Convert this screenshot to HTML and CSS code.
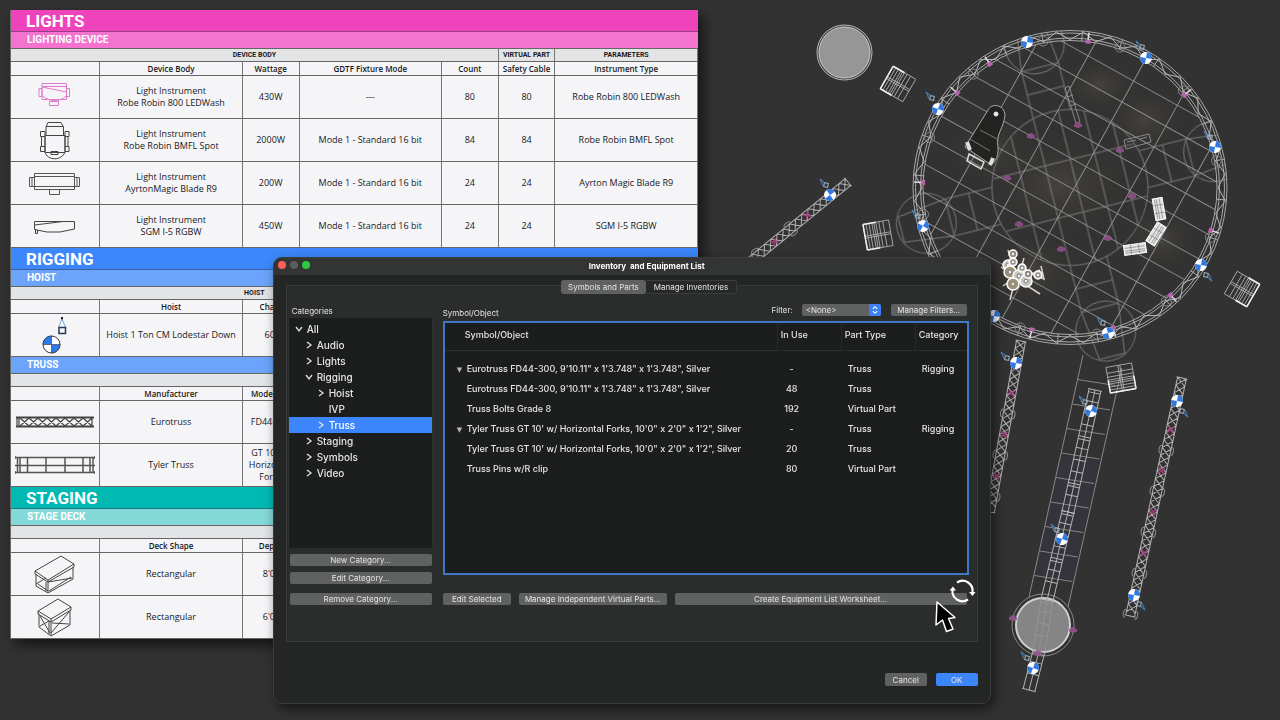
FILE: index.html
```html
<!DOCTYPE html>
<html lang="en">
<head>
<meta charset="utf-8">
<title>Inventory and Equipment List</title>
<link rel="stylesheet" href="styles.css">
</head>
<body>
<main class="desktop">
  <svg class="plan" id="plan" viewBox="0 0 1280 720" preserveAspectRatio="xMaxYMin meet" role="img" aria-label="Stage plan">
    <defs>
      <radialGradient id="glow"><stop offset="0" stop-color="#4e4a42" stop-opacity=".7"/><stop offset="1" stop-color="#2e2d2b" stop-opacity="0"/></radialGradient>
      <clipPath id="ring-clip"><circle r="157"/></clipPath>
      <g id="hoist"><circle r="6" fill="#fff"/><path d="M0 0V-6A6 6 0 0 1 6 0ZM0 0V6A6 6 0 0 1 -6 0Z" fill="#3278e0"/></g>
      <g id="chain" fill="none" stroke="#4d7fb8"><rect x="-2" y="-2" width="4" height="4" stroke="#a5b4c4"/><path d="M-2 -2L-7 -5L-3 1"/></g>
      <g id="cart" fill="none" stroke="#b4b4b4" stroke-width=".8"><rect x="-13" y="-13" width="26" height="26"/><path d="M-13 -13V13M-10 -13V13M-7 -13V13M-4 -13V13M-2 -13V13M0 -13V13M3 -13V13M7 -13V13M-13 -1H13M-13 1H13"/><path d="M-13 -13H0M-13 13H0M-13 -13V13" stroke="#f0f0f0" stroke-width="1.500"/></g>
      <g id="sofa"><rect x="-11" y="-5" width="22" height="10" fill="#e4e4e4" stroke="#fff"/><path d="M-10 -2H10M-10 1H10M-10 3H10M-4 -5V5M4 -5V5" stroke="#777" stroke-width=".6"/></g>
    </defs>
  </svg>

  <article class="sheet">
    <section>
      <h2 class="band lights">LIGHTS</h2>
      <h3 class="subband lights-sub">LIGHTING DEVICE</h3>
      <table class="grid">
        <colgroup><col class="c-pic"><col class="c-wide"><col class="c-slim"><col class="c-wide"><col class="c-slim"><col class="c-slim"><col class="c-wide"></colgroup>
        <tr class="group"><th colspan="5">DEVICE BODY</th><th>VIRTUAL PART</th><th>PARAMETERS</th></tr>
        <tr class="heads"><th></th><th>Device Body</th><th>Wattage</th><th>GDTF Fixture Mode</th><th>Count</th><th>Safety Cable</th><th>Instrument Type</th></tr>
        <tr><td><svg class="pic" viewBox="0 0 80 40" fill="none" stroke="#e07acb"><path d="M27 6.500H51.500V22.500H27ZM27 9.500H51.500M24 11.500H27V19.500H24ZM51.500 11.500H54.500V19.500H51.500ZM27 10L51.500 15M28 19C33 25 46 25 51 19M34.500 24.500H43.500V28.500H34.500Z"/></svg></td><td>Light Instrument<br>Robe Robin 800 LEDWash</td><td>430W</td><td>---</td><td>80</td><td>80</td><td>Robe Robin 800 LEDWash</td></tr>
        <tr><td><svg class="pic" viewBox="0 0 80 40" fill="none" stroke="#444"><path d="M33 2.500H46L48.500 7V15.500H50V32.500H30V15.500H31V7ZM31 6.500H48M30 15.500H50M30 32C32 41 47 41 50 32M36 31.500H43V34.500H36ZM25.500 11.500H30V16.500H25.500ZM50 11.500H54V16.500H50ZM26.500 16.500H30V26.500H26.500ZM50 16.500H53V26.500H50ZM25.500 26.500H30V31.500H25.500ZM50 26.500H54V31.500H50Z"/></svg></td><td>Light Instrument<br>Robe Robin BMFL Spot</td><td>2000W</td><td>Mode 1 - Standard 16 bit</td><td>84</td><td>84</td><td>Robe Robin BMFL Spot</td></tr>
        <tr><td><svg class="pic" viewBox="0 0 80 40" fill="none" stroke="#555"><path d="M19.500 10.500H59.500V26.500H19.500ZM19.500 13.500H59.500M19.500 23.500H59.500M14.500 14.500H19.500V23.500H14.500ZM59.500 14.500H64.500V23.500H59.500ZM17 14V23M62 14V23M34.500 26.500H44.500V31.500H34.500Z"/></svg></td><td>Light Instrument<br>AyrtonMagic Blade R9</td><td>200W</td><td>Mode 1 - Standard 16 bit</td><td>24</td><td>24</td><td>Ayrton Magic Blade R9</td></tr>
        <tr><td><svg class="pic" viewBox="0 0 80 40" fill="none" stroke="#444"><path d="M19.500 15.500H59.500V23L45 26H32L19.500 23.500ZM19.500 19L48 15.500M20.500 23V27.500H22.500V24"/></svg></td><td>Light Instrument<br>SGM I-5 RGBW</td><td>450W</td><td>Mode 1 - Standard 16 bit</td><td>24</td><td>24</td><td>SGM I-5 RGBW</td></tr>
      </table>
    </section>
    <section>
      <h2 class="band rigging">RIGGING</h2>
      <h3 class="subband rigging-sub">HOIST</h3>
      <table class="grid">
        <colgroup><col class="c-pic"><col class="c-wide"><col class="c-slim"><col class="c-wide"><col class="c-slim"><col class="c-slim"><col class="c-wide"></colgroup>
        <tr class="group"><th colspan="5">HOIST</th><th></th><th></th></tr>
        <tr class="heads"><th></th><th>Hoist</th><th>Chain</th><th></th><th></th><th></th><th></th></tr>
        <tr><td><svg class="pic" viewBox="0 0 80 40" fill="none"><path d="M47 2V5" stroke="#222" stroke-width="2"/><path d="M47 4L43.500 12M47 4L50.500 12" stroke="#77a9dd"/><path d="M44 12.500H50.500V18.500H44Z" stroke="#24394f" stroke-width="1.500"/><circle cx="36.500" cy="29.500" r="8.500" fill="#fff" stroke="#333"/><path d="M36.500 29.500V21A8.500 8.500 0 0 0 28 29.500ZM36.500 29.500V38A8.500 8.500 0 0 0 45 29.500Z" fill="#2f78e8" stroke="#333" stroke-width=".6"/></svg></td><td>Hoist 1 Ton CM Lodestar Down</td><td>60'</td><td></td><td></td><td></td><td></td></tr>
      </table>
      <h3 class="subband rigging-sub">TRUSS</h3>
      <table class="grid">
        <colgroup><col class="c-pic"><col class="c-wide"><col class="c-slim"><col class="c-wide"><col class="c-slim"><col class="c-slim"><col class="c-wide"></colgroup>
        <tr class="group"><th colspan="7"></th></tr>
        <tr class="heads"><th></th><th>Manufacturer</th><th>Model No.</th><th></th><th></th><th></th><th></th></tr>
        <tr><td><svg class="pic" viewBox="0 0 80 40" fill="none" stroke="#444"><path d="M1 15.500H79M1 24.500H79" stroke-width="2"/><path d="M2 15V25M4 15V25M77 15V25M5 16L14 24M14 16L5 24M14 16L23 24M23 16L14 24M23 16L32 24M32 16L23 24M32 16L41 24M41 16L32 24M41 16L50 24M50 16L41 24M50 16L59 24M59 16L50 24M59 16L68 24M68 16L59 24M68 16L77 24M77 16L68 24" stroke-width="1.200"/></svg></td><td>Eurotruss</td><td>FD44-300</td><td></td><td></td><td></td><td></td></tr>
        <tr><td><svg class="pic" viewBox="0 0 80 40" fill="none" stroke="#555"><path d="M0 12.500H80M0 20.500H80M0 27.500H80" stroke-width="1.500"/><path d="M2.500 12V28M5 12V28M12.500 12V28M31 12V28M50 12V28M68 12V28M75 12V28M78 12V28M0 11V14M0 26V29M80 11V14M80 26V29" stroke-width="1.500"/></svg></td><td>Tyler Truss</td><td>GT 10' w/<br>Horizontal<br>Forks</td><td></td><td></td><td></td><td></td></tr>
      </table>
    </section>
    <section>
      <h2 class="band staging">STAGING</h2>
      <h3 class="subband staging-sub">STAGE DECK</h3>
      <table class="grid">
        <colgroup><col class="c-pic"><col class="c-wide"><col class="c-slim"><col class="c-wide"><col class="c-slim"><col class="c-slim"><col class="c-wide"></colgroup>
        <tr class="group"><th colspan="7"></th></tr>
        <tr class="heads"><th></th><th>Deck Shape</th><th>Depth</th><th></th><th></th><th></th><th></th></tr>
        <tr><td><svg class="pic" viewBox="0 0 80 40" fill="none" stroke="#444"><path d="M20 17L46 2L59 10L33 26ZM20 17V20L33 28L59 13V10M33 26V38M21 20V32L33 39L58 25V13M31 28V37M21 30L31 24M33 28L57 24M34 37L56 23M23 30L33 37"/></svg></td><td>Rectangular</td><td>8'0"</td><td></td><td></td><td></td><td></td></tr>
        <tr><td><svg class="pic" viewBox="0 0 80 40" fill="none" stroke="#444"><path d="M23 14L43 2L56 10L36 22ZM23 14V17L36 25L56 13V10M36 22V38M34 24V37M24 17V30L36 39L55 28V13M36 36L54 15M37 26L54 27M25 29L34 24M25 19L35 36"/></svg></td><td>Rectangular</td><td>6'0"</td><td></td><td></td><td></td><td></td></tr>
      </table>
    </section>
  </article>

  <section class="dialog" role="dialog" aria-labelledby="dlg-title">
    <header class="titlebar">
      <div class="lamps"><button class="lamp red" aria-label="Close"></button><button class="lamp gray" aria-label="Minimize"></button><button class="lamp green" aria-label="Zoom"></button></div>
      <h1 id="dlg-title" class="title">Inventory &nbsp;and Equipment List</h1>
    </header>
    <div class="body">
      <div class="panel">
        <div class="tabs" role="tablist"><button class="tab active" role="tab" aria-selected="true">Symbols and Parts</button><button class="tab" role="tab" aria-selected="false">Manage Inventories</button></div>
        <div class="columns">
          <div class="side">
            <h2 class="label" id="cat-label">Categories</h2>
            <ul class="tree" role="tree" aria-labelledby="cat-label">
              <li role="treeitem" class="l0 open"><svg class="chev" viewBox="0 0 8 8"><path d="M2 1L6 4L2 7"/></svg>All</li>
              <li role="treeitem" class="l1"><svg class="chev" viewBox="0 0 8 8"><path d="M2 1L6 4L2 7"/></svg>Audio</li>
              <li role="treeitem" class="l1"><svg class="chev" viewBox="0 0 8 8"><path d="M2 1L6 4L2 7"/></svg>Lights</li>
              <li role="treeitem" class="l1 open"><svg class="chev" viewBox="0 0 8 8"><path d="M2 1L6 4L2 7"/></svg>Rigging</li>
              <li role="treeitem" class="l2"><svg class="chev" viewBox="0 0 8 8"><path d="M2 1L6 4L2 7"/></svg>Hoist</li>
              <li role="treeitem" class="l2"><svg class="chev" viewBox="0 0 8 8"></svg>IVP</li>
              <li role="treeitem" class="l2 selected" aria-selected="true"><svg class="chev" viewBox="0 0 8 8"><path d="M2 1L6 4L2 7"/></svg>Truss</li>
              <li role="treeitem" class="l1"><svg class="chev" viewBox="0 0 8 8"><path d="M2 1L6 4L2 7"/></svg>Staging</li>
              <li role="treeitem" class="l1"><svg class="chev" viewBox="0 0 8 8"><path d="M2 1L6 4L2 7"/></svg>Symbols</li>
              <li role="treeitem" class="l1"><svg class="chev" viewBox="0 0 8 8"><path d="M2 1L6 4L2 7"/></svg>Video</li>
            </ul>
            <div class="stack"><button class="btn">New Category...</button><button class="btn">Edit Category...</button><button class="btn last">Remove Category...</button></div>
          </div>
          <div class="content">
            <div class="toolbar">
              <h2 class="label low">Symbol/Object</h2>
              <label class="label" for="filter">Filter:</label>
              <span class="picker"><select id="filter"><option>&lt;None&gt;</option></select><svg class="stepper" viewBox="0 0 11 11"><rect width="11" height="11" rx="2" fill="#3c82f6"/><path d="M3.500 4.500L5.500 2.500L7.500 4.500M3.500 6.500L5.500 8.500L7.500 6.500" fill="none" stroke="#fff"/></svg></span>
              <button class="btn filters">Manage Filters...</button>
            </div>
            <div class="list">
              <table class="items">
                <colgroup><col><col class="k-use"><col class="k-type"><col class="k-cat"></colgroup>
                <thead><tr><th>Symbol/Object</th><th>In Use</th><th>Part Type</th><th>Category</th></tr></thead>
                <tbody>
                  <tr><td><span class="tri">▼</span>Eurotruss FD44-300, 9'10.11" x 1'3.748" x 1'3.748", Silver</td><td>-</td><td>Truss</td><td>Rigging</td></tr>
                  <tr><td>Eurotruss FD44-300, 9'10.11" x 1'3.748" x 1'3.748", Silver</td><td>48</td><td>Truss</td><td></td></tr>
                  <tr><td>Truss Bolts Grade 8</td><td>192</td><td>Virtual Part</td><td></td></tr>
                  <tr><td><span class="tri">▼</span>Tyler Truss GT 10' w/ Horizontal Forks, 10'0" x 2'0" x 1'2", Silver</td><td>-</td><td>Truss</td><td>Rigging</td></tr>
                  <tr><td>Tyler Truss GT 10' w/ Horizontal Forks, 10'0" x 2'0" x 1'2", Silver</td><td>20</td><td>Truss</td><td></td></tr>
                  <tr><td>Truss Pins w/R clip</td><td>80</td><td>Virtual Part</td><td></td></tr>
                </tbody>
              </table>
            </div>
            <div class="actions"><button class="btn edit">Edit Selected</button><button class="btn manage">Manage Independent Virtual Parts...</button><button class="btn create">Create Equipment List Worksheet...</button></div>
          </div>
        </div>
      </div>
      <footer class="foot"><button class="btn">Cancel</button><button class="btn primary">OK</button></footer>
    </div>
    <svg class="pointer" viewBox="0 0 50 60" aria-hidden="true">
      <g fill="none" stroke="#fff" stroke-width="2.200"><path d="M24 7.500A10 10 0 0 1 39.500 17M35 24.500A10 10 0 0 1 19.500 15"/></g>
      <path d="M16.500 15.500L20 11.500L23 15.500ZM36 17H42.500L39.500 21Z" fill="#fff"/>
      <path d="M4 27L3 50L9.500 45L13.500 56.500L20 54L15.500 43.500L22 42.500Z" fill="#000" stroke="#fff" stroke-width="1.500" stroke-linejoin="round"/>
    </svg>
  </section>
</main>
<script src="plan.js"></script>
</body>
</html>
```

FILE: styles.css
```css
* { box-sizing: border-box; }
body { margin: 0; background: #323232; font-family: Inter, "Liberation Sans", sans-serif; }
h1, h2, h3, ul { margin: 0; padding: 0; font-weight: 400; }
button, select { font: inherit; color: inherit; border: 0; padding: 0; }

.desktop { position: relative; min-height: 100vh; padding: 10px; overflow: hidden; }
.plan { position: absolute; inset: 0; width: 100%; height: 100%; }

/* Worksheet */
.sheet { position: relative; width: 54.6%; border-left: 1px solid #6a6a6a; background: #f5f5f8; color: #18181c; font-family: "Open Sans", "Liberation Sans", sans-serif; box-shadow: 5px 6px 12px rgba(0, 0, 0, .6); }
.band { height: 22px; padding-left: 15px; color: #fff; font-family: Roboto, sans-serif; font-size: 17px; line-height: 22px; font-weight: 700; border-bottom: 1px solid rgba(60, 60, 80, .5); }
.subband { height: 17px; padding-left: 16px; color: #fff; font-family: Roboto, sans-serif; font-size: 10px; line-height: 16px; font-weight: 700; border-bottom: 1px solid #666; }
.lights { background: #ee43bb; }
.lights-sub { background: #f373ce; }
.rigging { background: #3c87fb; }
.rigging-sub { background: #6ca4fb; }
.staging { background: #00b9b3; }
.staging-sub { background: #82d9d7; }
.grid { width: 100%; table-layout: fixed; border-spacing: 0; font-size: 9px; line-height: 12px; }
.c-pic { width: 13%; }
.c-wide { width: 20.75%; }
.c-slim { width: 8.25%; }
.grid th, .grid td { padding: 0; text-align: center; vertical-align: middle; border-right: 1px solid #777; border-bottom: 1px solid #666; }
.grid tr { height: 43px; }
.grid .group { height: 13px; background: #e3e4e6; font-family: Roboto, sans-serif; font-size: 7px; }
.grid .heads { height: 14px; font-size: 8px; }
.grid .heads th { font-weight: 600; }
.pic { display: block; width: 80px; height: 40px; margin: 0 auto; }

/* Dialog window */
.dialog { position: absolute; left: 21.3%; top: 257px; width: 56.1%; border: 1px solid #3b3d3c; border-radius: 9px; background: #242625; color: #e4e4e4; font-size: 8px; line-height: 12px; box-shadow: 3px 5px 12px rgba(0, 0, 0, .55); overflow: hidden; }
.titlebar { display: grid; grid-template-columns: 1fr auto 1fr; align-items: start; height: 17px; padding-top: 2px; background: #333534; }
.lamps { display: flex; gap: 4px; padding: 1px 0 0 4px; }
.lamp { width: 8px; height: 8px; border-radius: 50%; }
.red { background: #fe5f57; }
.gray { background: #5b5c5e; }
.green { background: #2bc840; }
.title { font-size: 8px; font-weight: 700; color: #fff; padding-left: 30px; }
.body { padding: 10px 12px 17px; }
.panel { border: 1px solid #393b3a; background: #2b2d2c; padding: 0 8px 36px 1px; }
.tabs { display: flex; justify-content: center; margin-top: -6px; padding-left: 42px; }
.tab { height: 14px; padding: 0 8px; border: 1px solid #3b3d3c; border-left: 0; border-radius: 0 3px 3px 0; background: #272928; }
.tab.active { padding: 0 7px; border: 0; border-radius: 3px; background: #606261; }
.columns { display: grid; grid-template-columns: 145fr 526fr; column-gap: 10px; padding-top: 9px; }
.side, .content { display: flex; flex-direction: column; min-width: 0; }
.label { font-size: 8px; line-height: 12px; }
.side > .label { padding: 2px 0 1px 4px; }
.tree { list-style: none; height: 230px; padding-top: 3px; background: #1c1e1d; border: 1px solid #2f3130; border-width: 0 1px; font-size: 10px; font-weight: 500; line-height: 16px; }
.tree li { display: flex; align-items: center; gap: 4px; height: 16px; }
.l0 { padding-left: 6px; }
.l1 { padding-left: 16px; }
.l2 { padding-left: 28px; }
.selected { background: #3c85fb; color: #fff; }
.chev { width: 8px; height: 8px; fill: none; stroke: #ddd; stroke-width: 1.3; }
.open .chev { transform: rotate(90deg); }
.stack { display: flex; flex-direction: column; gap: 6px; padding: 6px 1px 0 2px; }
.stack .last { margin-top: 3px; }
.btn { height: 12px; line-height: 12px; border-radius: 2px; background: #606261; text-align: center; white-space: nowrap; }
.toolbar { display: flex; align-items: flex-start; gap: 9px; padding: 1px 2px 2px 0; }
.low { flex: 1; padding-top: 3px; }
.picker { position: relative; flex: 0 0 79px; display: flex; }
.picker select { width: 100%; height: 12px; appearance: none; border-radius: 2px; background: #606261; padding-left: 4px; }
.stepper { position: absolute; right: 0; top: 0; width: 12px; height: 12px; }
.filters { flex: 0 0 76px; margin-left: 1px; }
.list { height: 254px; border: 2px solid #4077c6; background: #1c1e1d; }
.items { width: 100%; table-layout: fixed; border-spacing: 0; font-size: 9px; font-weight: 500; line-height: 14px; text-align: left; white-space: nowrap; }
.k-use { width: 64px; }
.k-type { width: 74px; }
.k-cat { width: 52px; }
.items th { height: 28px; padding: 0 0 3px 3px; font-weight: 500; border-bottom: 1px solid #2d2f2e; border-left: 1px solid #292b2a; }
.items th:first-child { padding-left: 20px; border-left: 0; }
.items td { height: 20px; padding: 0 0 0 7px; }
.items td:first-child { padding-left: 22px; }
.items td:nth-child(2) { padding: 0 34px 0 0; text-align: center; }
.items tbody::before { content: ""; display: block; height: 8px; }
.tri { display: inline-block; width: 10px; margin-left: -10px; font-size: 7px; line-height: 8px; color: #b5b5b5; font-family: "DejaVu Sans", sans-serif; }
.actions { display: flex; gap: 8px; padding: 18px 2px 0 0; }
.edit { flex: 68 1 0; }
.manage { flex: 147 1 0; }
.create { flex: 291 1 0; }
.foot { display: flex; justify-content: flex-end; gap: 9px; padding-top: 31px; }
.foot .btn { width: 42px; height: 13px; }
.foot .primary { background: #3c85fb; }
.pointer { position: absolute; right: 7px; top: 317px; width: 50px; height: 60px; }
```

FILE: plan.js
```js
const plan = document.getElementById('plan');
const out = [];
const f = n => n.toFixed(1);
const path = (d, color = '#a4a4a4', extra = '') => out.push(`<path d="${d}" fill="none" stroke="${color}" ${extra}/>`);
const circle = (x, y, r, color = '#a4a4a4', fill = 'none', w = 1) => out.push(`<circle cx="${x}" cy="${y}" r="${r}" fill="${fill}" stroke="${color}" stroke-width="${w}"/>`);
const use = (id, x, y, a = 0) => out.push(`<use href="#${id}" transform="translate(${x} ${y}) rotate(${a})"/>`);

// Warm pools of light on the floor
[[990, 150, 50, 40], [1100, 85, 45, 32], [1145, 120, 50, 40], [1060, 185, 90, 60], [1160, 240, 45, 40], [1030, 270, 60, 40]]
  .forEach(([x, y, rx, ry]) => out.push(`<ellipse cx="${x}" cy="${y}" rx="${rx}" ry="${ry}" fill="url(#glow)"/>`));

// Floor grid clipped to the ring
const CX = 1070, CY = 187.5, R = 147;
out.push(`<g transform="translate(${CX} ${CY}) rotate(29)" stroke-width=".9">`);
[-99, -48, 4, 54, 104].forEach(o => { const h = Math.sqrt(R * R - o * o); path(`M${o} ${f(-h)}V${f(h)}`, '#949494'); });
[-124, -100, -76, -51, -26, 0, 25, 50, 75, 100, 124].forEach(o => { const h = Math.sqrt(R * R - o * o); path(`M${f(-h)} ${o}H${f(h)}`, '#8c8c8c'); });
out.push('</g>');

// Centre platform and its four arms; two arms reach past the ring
out.push(`<g transform="translate(${CX} ${CY}) rotate(-14)" opacity=".6">`);
circle(0, 0, 78);
[-45, -19, 7, 32, 57].forEach(o => { const h = Math.sqrt(78 * 78 - o * o); path(`M${o} ${f(-h)}V${f(h)}`); });
[-27, 27].forEach(o => path(`M-72 ${o}H72`));
[0, 90, 180, 270].forEach(a => {
  const inside = a < 180;
  out.push(`<g ${inside ? 'clip-path="url(#ring-clip)"' : ''}><g transform="rotate(${a})">`);
  path('M-19 -76V-124H19V-76M-19 -100H19');
  path('M-19 -124L-13 -174H13L19 -124');
  circle(0, -148, 30);
  out.push('</g></g>');
});
out.push('</g>');

// Ring truss
[157, 154.5, 149.5, 147].forEach(r => circle(CX, CY, r, '#a8a8a8'));
let ring = '';
for (let i = 0; i <= 72; i++) {
  const a = i * Math.PI / 36, r = i % 2 ? 156 : 148;
  ring += `${i ? 'L' : 'M'}${f(CX + r * Math.cos(a))} ${f(CY + r * Math.sin(a))}`;
}
path(ring, '#b8b8b8');
for (let i = 0; i < 24; i++) {
  const a = i * Math.PI / 12 + .08, c = Math.cos(a), s = Math.sin(a);
  path(`M${f(CX + 147 * c)} ${f(CY + 147 * s)}L${f(CX + 157 * c)} ${f(CY + 157 * s)}`, '#aaa');
  if (i % 2) circle(f(CX + 149 * c), f(CY + 149 * s), 5, '#858585');
}
[17, 47, 73, 105, 138, 182, 220, 237, 277, 321].forEach(d => {
  const a = d * Math.PI / 180, c = Math.cos(a), s = Math.sin(a);
  path(`M${f(CX + 147 * c)} ${f(CY + 147 * s)}L${f(CX + 156 * c)} ${f(CY + 156 * s)}`, '#e4dce4', 'stroke-width="1.500"');
  path(`M${f(CX + 145 * c)} ${f(CY + 145 * s)}L${f(CX + 149 * c)} ${f(CY + 149 * s)}`, '#b763ad', 'stroke-width="5"');
});

// Straight trusses: two rails with crossed bracing
function truss(x1, y1, x2, y2, w, step, ladder) {
  const L = Math.hypot(x2 - x1, y2 - y1), a = Math.atan2(y2 - y1, x2 - x1) * 180 / Math.PI;
  out.push(`<g transform="translate(${x1} ${y1}) rotate(${f(a)})">`);
  let d = `M0 ${-w}H${f(L)}M0 ${w}H${f(L)}M0 ${-w - 1}V${w + 1}M${f(L)} ${-w - 1}V${w + 1}`;
  if (ladder) d += `M0 0H${f(L)}`;
  for (let x = 0; x + step <= L; x += step)
    d += ladder ? `M${x} ${-w}V${w}${x % 48 < step ? `M${x + 3} ${-w}V${w}` : ''}`
                : `M${x} ${-w}L${x + step} ${w}M${x} ${w}L${x + step} ${-w}`;
  path(d, '#b2b2b2');
  if (!ladder) for (let x = 53; x < L - 10; x += 42) {
    path(`M${x - 3} -3L${x + 3} 3M${x - 3} 3L${x + 3} -3`, '#a43c7d', 'stroke-width="1.500"');
    path(`M${x + 17} -5C${x + 17} -8 ${x + 25} -8 ${x + 25} -5M${x + 17} 5C${x + 17} 8 ${x + 25} 8 ${x + 25} 5`, '#8c8c8c');
  }
  out.push('</g>');
}
out.push('<path d="M1061 455L1035 574L1073 580L1098 462Z" fill="#363643" opacity=".65"/>');
path('M1083 355L1029 597M1122 368L1068 607', '#8a8a8a');
for (let i = 1; i < 10; i++) path(`M${f(1083 - i * 5.4)} ${f(355 + i * 24.5)}l38 6`, '#858585');
truss(848, 182, 740, 270, 4.5, 8);
truss(1021, 341, 990, 512, 4.5, 8);
truss(1182, 378, 1130, 616, 4.5, 8);
circle(1043, 625, 31, '#888'); circle(1043, 625, 27, '#d0d0d0', '#858585', 2);
truss(1095, 390, 1068, 512, 6, 12, true);
truss(1068, 512, 1047, 600, 6, 12, true);
out.push('<g opacity=".3">'); truss(1047, 600, 1039, 651, 6, 12, true); out.push('</g>');
truss(1039, 651, 1029, 690, 6, 12, true);
circle(844.5, 52.5, 27.5, '#b8b8b8', '#444'); circle(844.5, 52.5, 25.5, '#ccc', '#969696');

[[898, 84, 30], [878, 235, -10], [1242, 289, 210], [1121, 378, 260]].forEach(c => use('cart', ...c));
[[1159, 209, 80], [1156, 234, -58], [1135, 249, -8]].forEach(c => use('sofa', ...c));

// Grand piano with bench
path('M965 147L988 110C991 103 1004 104 1005 115C1004 128 995 135 998 147C999 158 993 165 990 164Z', '#aaa', 'style="fill:#232421"');
path('M970 139L990 151M980 130L999 140', '#777');
path('M969 154L984 162L981 169L967 161Z', '#ddd', 'stroke-width="1.500"');
path('M967 142L970 150M993 158L990 165', '#ddd', 'stroke-width="4"');
circle(996, 114, 2, '#eee', '#eee');

// Keyboards
path('M1065 88L1069 86L1080 122L1076 123ZM1067 97L1073 95M1070 106L1076 104M1124 140L1149 134L1151 142L1126 149ZM1127 142L1136 140M1140 139L1147 137', '#8a8a8a');

// Drum kit
path('M1010 263L1020 274L1003 286M1024 258L1018 280L1040 294M1008 250L1012 263M1026 270L1044 279L1041 266M1014 284L1010 300M1001 267L1024 284M1030 275L1040 270', '#d8d4cc', 'stroke-width="1.500"');
[[1013, 254, 4], [1008, 265, 5], [1013, 262, 4], [1010, 272, 6], [1019, 276, 6], [1026, 281, 6], [1013, 284, 6], [1022, 268, 4], [1038, 275, 4], [1028, 274, 4]]
  .forEach(([x, y, r], i) => { circle(x, y, r, '#fff', i % 3 ? '#c9c7c3' : '#9f9077', 1.5); circle(x, y, 2, '#777', '#eee'); });

// Floor fixtures
[[1078, 125], [1031, 136], [1120, 150], [1007, 178], [1132, 196], [1019, 224], [1108, 238], [1061, 249], [1013, 618], [1073, 630], [1038, 653]]
  .forEach(([x, y]) => out.push(`<g fill="#94528f" opacity=".85"><circle cx="${x}" cy="${y}" r="3"/><path d="M${x - 4} ${y - 1}h8v3h-8z"/></g>`));

[[938, 109, 20, -6, -11], [923, 226, 30, -5, -10], [1027, 42, 10, 0, 0], [1146, 58, 10, -4, -11], [1215, 147, 10, -5, -10], [1201, 265, 10, 5, 10], [1108, 333, -15, -5, -10], [994, 316, 10, 0, 0],
 [830, 195, -35, -4, -10], [1016, 363, 10, -9, -5], [1177, 401, 10, 5, 10], [1134, 595, 10, 5, 9], [1091, 411, 20, -6, -9], [1062, 539, 20, -5, -9], [1033, 668, 20, -6, -10]]
  .forEach(([x, y, a, dx, dy]) => {
    if (dx) use('chain', x + dx, y + dy, dx > 0 ? 190 : 10);
    use('hoist', x, y, a);
  });

plan.insertAdjacentHTML('beforeend', out.join(''));
```
